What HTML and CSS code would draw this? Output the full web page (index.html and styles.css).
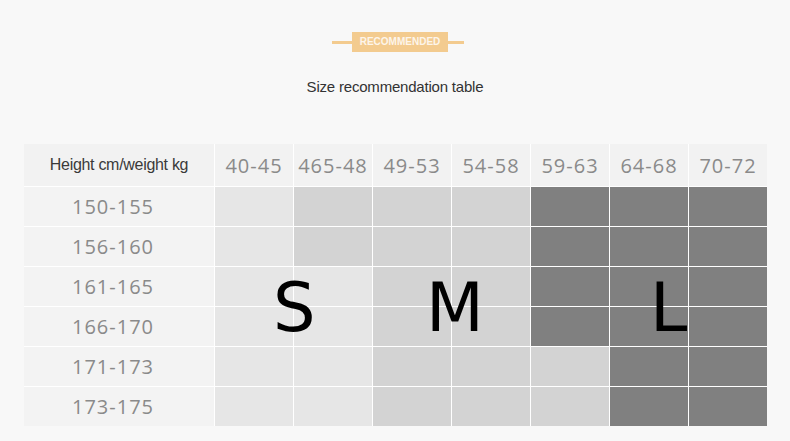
FILE: index.html
```html
<!DOCTYPE html>
<html>
<head>
<meta charset="utf-8">
<link rel="stylesheet" href="styles.css">
</head>
<body>
<div class="page">
  <div class="badge-row">
    <span class="badge-line"></span>
    <span class="badge">RECOMMENDED</span>
    <span class="badge-line"></span>
  </div>
  <h1 class="title">Size recommendation table</h1>
  <div class="table-wrap">
    <div class="grid">
      <div class="hd first">Height cm/weight kg</div>
      <div class="hd">40-45</div>
      <div class="hd">465-48</div>
      <div class="hd">49-53</div>
      <div class="hd">54-58</div>
      <div class="hd">59-63</div>
      <div class="hd">64-68</div>
      <div class="hd">70-72</div>

      <div class="rh">150-155</div>
      <div class="c lt"></div><div class="c md"></div><div class="c md"></div><div class="c md"></div><div class="c dk"></div><div class="c dk"></div><div class="c dk"></div>

      <div class="rh">156-160</div>
      <div class="c lt"></div><div class="c md"></div><div class="c md"></div><div class="c md"></div><div class="c dk"></div><div class="c dk"></div><div class="c dk"></div>

      <div class="rh">161-165</div>
      <div class="c lt"></div><div class="c lt"></div><div class="c md"></div><div class="c md"></div><div class="c dk"></div><div class="c dk"></div><div class="c dk"></div>

      <div class="rh">166-170</div>
      <div class="c lt"></div><div class="c lt"></div><div class="c md"></div><div class="c md"></div><div class="c dk"></div><div class="c dk"></div><div class="c dk"></div>

      <div class="rh">171-173</div>
      <div class="c lt"></div><div class="c lt"></div><div class="c md"></div><div class="c md"></div><div class="c md"></div><div class="c dk"></div><div class="c dk"></div>

      <div class="rh">173-175</div>
      <div class="c lt"></div><div class="c lt"></div><div class="c md"></div><div class="c md"></div><div class="c md"></div><div class="c dk"></div><div class="c dk"></div>
    </div>
    <span class="size size-s">S</span>
    <span class="size size-m">M</span>
    <span class="size size-l">L</span>
  </div>
</div>
</body>
</html>
```

FILE: styles.css
```css
html, body {
  margin: 0;
  padding: 0;
  background: #f8f8f8;
}
.page {
  width: 790px;
  height: 441px;
  overflow: hidden;
  padding-top: 32px;
  box-sizing: border-box;
}
.badge-row {
  display: flex;
  justify-content: center;
  align-items: center;
  height: 20px;
  margin-left: 6px;
}
.badge-line {
  width: 20px;
  height: 3px;
  background: #f3cb8f;
}
.badge-line:last-child {
  width: 16px;
}
.badge {
  width: 96px;
  height: 20px;
  background: #f3cb8f;
  color: #fdf5ea;
  font-family: "Liberation Sans", Arial, sans-serif;
  font-weight: bold;
  font-size: 10px;
  line-height: 20px;
  text-align: center;
}
.title {
  margin: 0;
  margin-top: 26px;
  font-family: "Liberation Sans", Arial, sans-serif;
  font-weight: normal;
  font-size: 15px;
  letter-spacing: -0.2px;
  line-height: 18px;
  color: #333;
  text-align: center;
}
.table-wrap {
  position: relative;
  margin-top: 48px;
  margin-left: 24px;
  width: 743px;
}
.grid {
  display: grid;
  grid-template-columns: 190px repeat(7, 78px);
  grid-template-rows: 42px repeat(6, 39px);
  gap: 1px;
  background: #ffffff;
}
.hd {
  background: #f2f2f2;
  display: flex;
  align-items: center;
  justify-content: center;
  font-family: "Open Sans", "Noto Sans", sans-serif;
  font-size: 20px;
  letter-spacing: 1px;
  color: #8a8a8a;
}
.hd.first {
  font-family: "Liberation Sans", Arial, sans-serif;
  font-size: 16px;
  letter-spacing: -0.3px;
  color: #3a3a3a;
}
.rh {
  background: #f3f3f3;
  display: flex;
  align-items: center;
  justify-content: center;
  padding-right: 12px;
  font-family: "Open Sans", "Noto Sans", sans-serif;
  font-size: 20px;
  letter-spacing: 1px;
  color: #8a8a8a;
}
.c.lt { background: #e6e6e6; }
.c.md { background: #d3d3d3; }
.c.dk { background: #808080; }
.size {
  position: absolute;
  font-family: "DejaVu Sans", sans-serif;
  font-size: 67px;
  line-height: 70px;
  color: #000;
}
.size-s { left: 249px; top: 129px; }
.size-m { left: 402px; top: 129px; }
.size-l { left: 626px; top: 129px; }
```
